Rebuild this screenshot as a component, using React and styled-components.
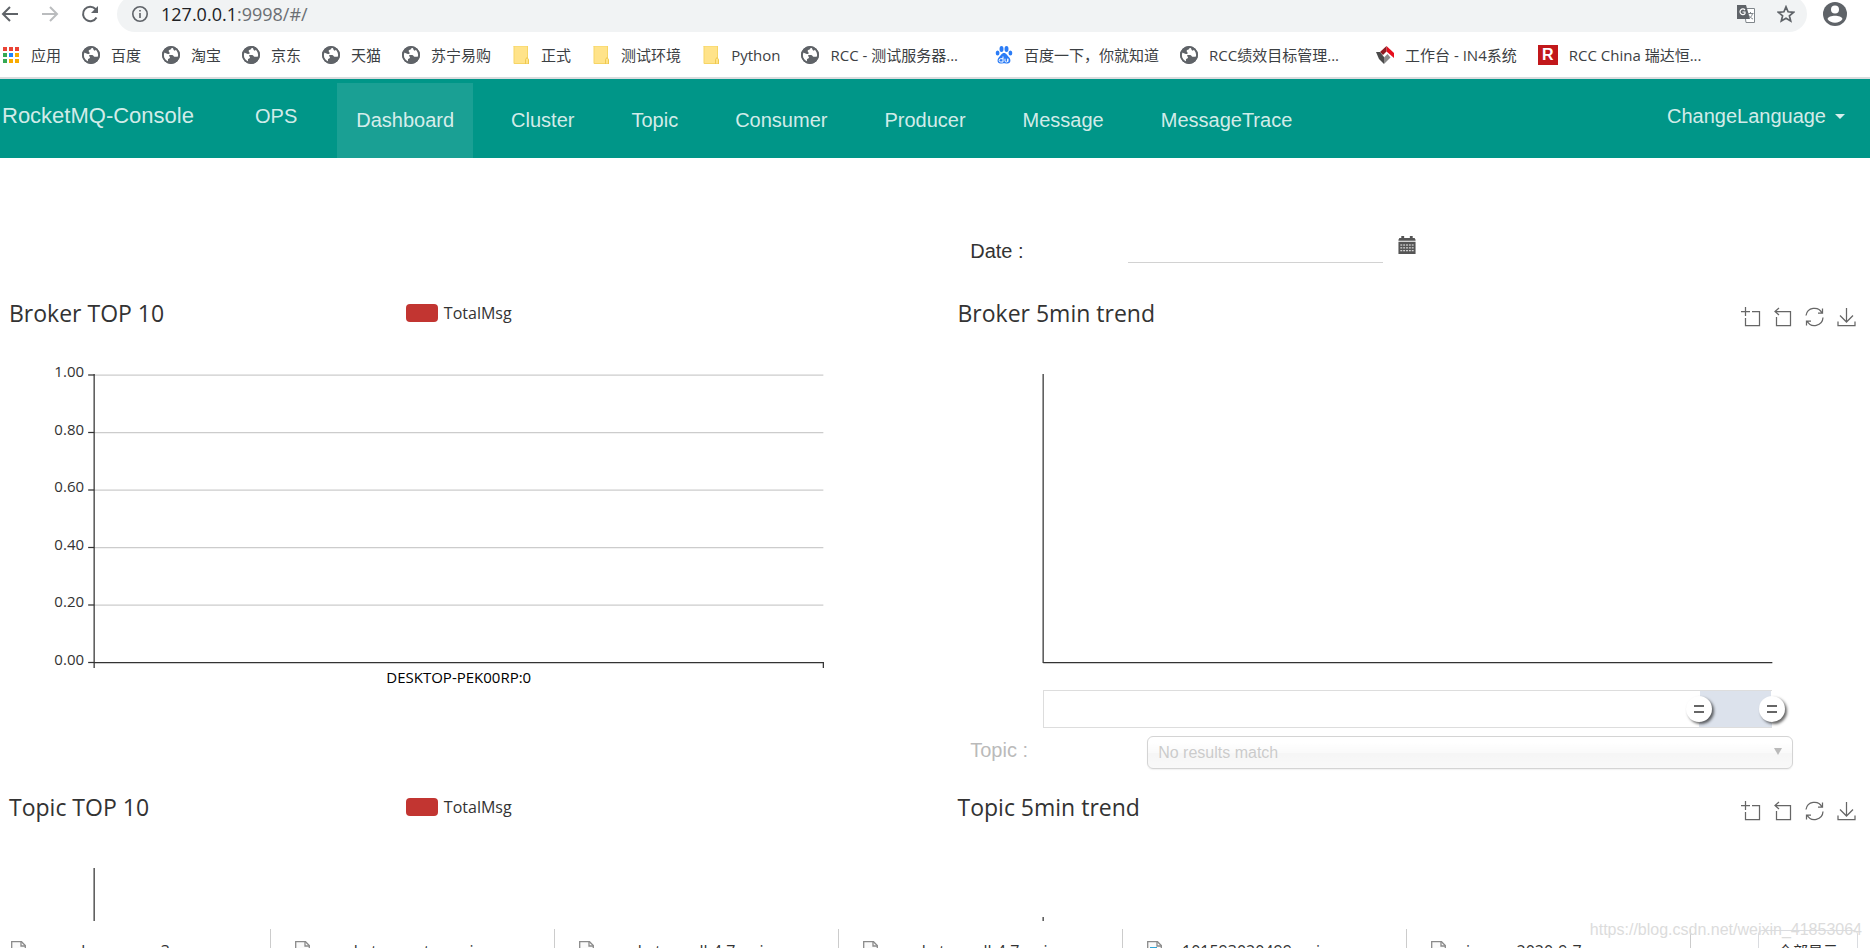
import { useState } from "react";
import styled, { createGlobalStyle } from "styled-components";

const GlobalStyle = createGlobalStyle`
  body {
    margin: 0;
    background: #fff;
    font-family: "Liberation Sans", Arial, sans-serif;
  }

  *, *::before, *::after {
    box-sizing: border-box;
  }
`;

const bookmarks = [
  { title: "应用", icon: "apps" },
  { title: "百度", icon: "globe" },
  { title: "淘宝", icon: "globe" },
  { title: "京东", icon: "globe" },
  { title: "天猫", icon: "globe" },
  { title: "苏宁易购", icon: "globe" },
  { title: "正式", icon: "folder" },
  { title: "测试环境", icon: "folder" },
  { title: "Python", icon: "folder" },
  { title: "RCC - 测试服务器...", icon: "globe", wide: true },
  { title: "百度一下，你就知道", icon: "baidu" },
  { title: "RCC绩效目标管理...", icon: "globe", wide: true },
  { title: "工作台 - IN4系统", icon: "in4" },
  { title: "RCC China 瑞达恒...", icon: "rcc" },
];

const navItems = [
  "Dashboard",
  "Cluster",
  "Topic",
  "Consumer",
  "Producer",
  "Message",
  "MessageTrace",
];

const downloads = [
  { name: "apache-maven-3….exe" },
  { name: "rocketmq-exter….zip" },
  { name: "rocketmq-all-4.7….zip" },
  { name: "rocketmq-all-4.7….zip" },
  { name: "101593020499….zip", image: true },
  { name: "image-2020-9-7….png" },
];

const BookmarkIcon = ({ type }) => {
  switch (type) {
    case "apps":
      return (
        <svg width="18" height="18" viewBox="0 0 18 18">
          {["#ea4335", "#ea4335", "#ea4335", "#34a853", "#1a84ff", "#f9ab00", "#34a853", "#f9ab00", "#f9ab00"].map(
            (fill, i) => (
              <rect key={i} x={(i % 3) * 6 + 1} y={Math.floor(i / 3) * 6 + 1} width="4" height="4" fill={fill} />
            )
          )}
        </svg>
      );
    case "folder":
      return (
        <svg width="18" height="18" viewBox="0 0 18 18">
          <path d="M2 0h13v12l2 2v4H2z" fill="#ffe38a" />
          <path d="M1.500 0h14v12M2 0v17.500h12.500" fill="none" stroke="#f6d565" />
          <path d="M13.500 18v-4.500l1.500-2 1.500 2V18z" fill="#ffe38a" stroke="#efc94f" />
        </svg>
      );
    case "baidu":
      return (
        <svg width="18" height="18" viewBox="0 0 18 18" fill="#2b7cf6">
          <ellipse cx="6.500" cy="3" rx="2" ry="2.900" />
          <ellipse cx="11.500" cy="3" rx="2" ry="2.900" />
          <ellipse cx="2.600" cy="7" rx="1.900" ry="2.600" />
          <ellipse cx="15.400" cy="7" rx="1.900" ry="2.600" />
          <path d="M9 7c2.500 0 3.200 2.600 5 4.200 2 1.800 2.200 6.300-1.500 6.300-1.300 0-2-.3-3.500-.3s-2.200.3-3.500.3c-3.700 0-3.500-4.500-1.500-6.300C5.800 9.600 6.500 7 9 7z" />
          <path d="M8 10.500V16H5.800a1.600 1.600 0 0 1 0-3.300H8M10 12.700V15c0 1.400 2.800 1.400 2.800 0v-2.300V16" fill="none" stroke="#fff" />
        </svg>
      );
    case "in4":
      return (
        <svg width="18" height="18" viewBox="0 0 18 18">
          <path d="M10.500 0L18 7v5l-7.500-6.500z" fill="#e60f1e" />
          <path d="M10.500 0v5.500L7 9 4 6z" fill="#8e1c22" />
          <path d="M0 6h4l4 5v7l-5-5z" fill="#4a4a4a" />
          <path d="M8 11.500l3.500-3.500 3 3.500L8 18z" fill="#8a8a8a" />
        </svg>
      );
    case "rcc":
      return <RccBadge>R</RccBadge>;
    default:
      return (
        <svg width="18" height="18" viewBox="0 0 18 18">
          <circle cx="9" cy="9" r="9" fill="#5f6368" />
          <path d="M10.500 1.800c-1.500.2-1 1.200-1.900 1.700-1 .6-2 .4-2 1.500s1 .9 1.100 2c.1.900-.9 1-1.900.9L2 6.600C.8 9.600 2 14 5.900 15.900c.5-1.400-.4-2 .3-2.900.6-.8 1.700-.5 1.800-1.600.1-.9-1.200-1-.9-1.900.3-.8 1.800-.4 2.900-.4 1.500 0 1.400 1.300 2.300 1.600.9.300 2.600-.1 4-.2.700-3.300-.8-5.700-2.300-6.900-.4.800-1 1.300-1.800 1-.9-.4-.5-1.800-1.700-2.800z" fill="#fff" />
          <circle cx="9" cy="9" r="8.100" fill="none" stroke="#5f6368" strokeWidth="1.800" />
        </svg>
      );
  }
};

const toolPaths = [
  { title: "Zoom", d: "M4.500 0v9M0 4.500h9M11 4.500h7.500v14H4.500V11" },
  { title: "Zoom Reset", d: "M6 1L2 4.500 6 8M2 4.500h15.500v14H3.500V10" },
  { title: "Refresh", d: "M1 8.500A8.500 8.500 0 0 1 17 6M17.500 1.500V6H13M18 10.500A8.500 8.500 0 0 1 2 14M1.500 18.500V14H6" },
  { title: "Save", d: "M9.500 1v14M3 8.500L9.500 15 16 8.500M1 14.500v4h17v-4" },
];

const Toolbox = () => (
  <Tools>
    {toolPaths.map((tool) => (
      <IconButton key={tool.title} title={tool.title}>
        <svg width="20" height="20" viewBox="0 0 20 20" fill="none" stroke="#666" strokeWidth="1.250">
          <path d={tool.d} />
        </svg>
      </IconButton>
    ))}
  </Tools>
);

const ChartHeader = ({ title, legend, tools }) => (
  <Header>
    <ChartTitle>{title}</ChartTitle>
    {legend ? (
      <Legend>
        <Swatch />
        {legend}
      </Legend>
    ) : (
      <span />
    )}
    {tools && <Toolbox />}
  </Header>
);

const BarPlot = () => (
  <Plot>
    {[0, 1, 2, 3, 4].map((i) => (
      <line key={i} x1="10%" x2="90%" y1={i * 57.5 + 25} y2={i * 57.5 + 25} stroke="#ccc" strokeWidth="1.250" />
    ))}
    {["1.00", "0.80", "0.60", "0.40", "0.20", "0.00"].map((label, i) => (
      <g key={label}>
        <AxisLabel x="9%" dx="-1" y={i * 57.5 + 27} textAnchor="end">
          {label}
        </AxisLabel>
        <svg x="10%" y={i * 57.5 + 25} overflow="visible">
          <line x1="-6" x2="0" stroke="#333" strokeWidth="1.250" />
        </svg>
      </g>
    ))}
    <line x1="10%" x2="10%" y1="24" y2="318" stroke="#333" strokeWidth="1.250" />
    <line x1="90%" x2="90%" y1="312" y2="318" stroke="#333" strokeWidth="1.250" />
    <line x1="10%" x2="90%" y1="312.500" y2="312.500" stroke="#333" strokeWidth="1.250" />
    <AxisLabel x="50%" y="333" textAnchor="middle" $dark>
      DESKTOP-PEK00RP:0
    </AxisLabel>
  </Plot>
);

const TrendPlot = () => (
  <Plot>
    <line x1="10%" x2="10%" y1="24" y2="313" stroke="#333" strokeWidth="1.250" />
    <line x1="10%" x2="90%" y1="312.500" y2="312.500" stroke="#333" strokeWidth="1.250" />
  </Plot>
);

const DataZoom = () => {
  const [start, setStart] = useState(90);
  const [end, setEnd] = useState(100);

  return (
    <ZoomTrack>
      <ZoomFill style={{ marginLeft: `${start}%`, width: `${end - start}%` }} />
      <ZoomRange
        type="range"
        aria-label="Zoom start"
        value={start}
        onChange={(e) => setStart(Math.min(Number(e.target.value), end))}
      />
      <ZoomRange
        type="range"
        aria-label="Zoom end"
        value={end}
        onChange={(e) => setEnd(Math.max(Number(e.target.value), start))}
      />
    </ZoomTrack>
  );
};

const App = () => {
  return (
    <Window>
      <GlobalStyle />
      <AddressBar>
        <IconButton title="Back">
          <svg width="18" height="18" viewBox="0 0 18 18" fill="none" stroke="#5f6368" strokeWidth="2">
            <path d="M17 9H2M9 2L2 9l7 7" />
          </svg>
        </IconButton>
        <IconButton title="Forward">
          <svg width="18" height="18" viewBox="0 0 18 18" fill="none" stroke="#babcbe" strokeWidth="2">
            <path d="M1 9h15M9 2l7 7-7 7" />
          </svg>
        </IconButton>
        <IconButton title="Reload">
          <svg width="18" height="18" viewBox="0 0 18 18" fill="none" stroke="#5f6368" strokeWidth="2">
            <path d="M15.500 12.500A7.200 7.200 0 1 1 14.500 4L16 6" />
            <path d="M17 1v7h-7z" fill="#5f6368" stroke="none" />
          </svg>
        </IconButton>
        <Omnibox>
          <svg width="16" height="16" viewBox="0 0 16 16" fill="none" stroke="#5f6368" strokeWidth="1.600">
            <circle cx="8" cy="8" r="7.200" />
            <path d="M8 7v5M8 4v1.600" />
          </svg>
          <Url>
            127.0.0.1<UrlPath>:9998/#/</UrlPath>
          </Url>
          <IconButton title="Translate">
            <svg width="18" height="18" viewBox="0 0 18 18">
              <path d="M7 3.500h10.500v14H9z" fill="#fff" stroke="#80868b" />
              <path d="M0 0h9l4 14H0z" fill="#5f6368" />
              <path d="M8 5A2.800 2.800 0 1 0 8 8.500V7H5.500" fill="none" stroke="#fff" strokeWidth="1.200" />
              <path d="M10.500 8.500h6M13.500 7v1.500M15.500 8.500c-.5 2.500-2 4-3.500 5M12 10.500c1 1.500 2.500 3 4 3.500" fill="none" stroke="#80868b" />
            </svg>
          </IconButton>
          <IconButton title="Bookmark">
            <svg width="18" height="18" viewBox="0 0 18 18" fill="none" stroke="#5f6368" strokeWidth="1.700">
              <path d="M9 1.800l2.100 5 5.400.5-4.100 3.500 1.300 5.300L9 13.300l-4.700 2.800 1.300-5.300L1.500 7.300l5.400-.5z" />
            </svg>
          </IconButton>
        </Omnibox>
        <IconButton title="Profile">
          <svg width="24" height="24" viewBox="0 0 24 24">
            <circle cx="12" cy="12" r="12" fill="#5f6368" />
            <circle cx="12" cy="7.500" r="4" fill="#fff" />
            <path d="M4.500 17c1.200-4.400 13.800-4.400 15 0-3.200 5-11.800 5-15 0z" fill="#fff" />
          </svg>
        </IconButton>
      </AddressBar>

      <BookmarkBar>
        {bookmarks.map((bookmark) => (
          <Bookmark key={bookmark.title} href="#" $wide={bookmark.wide}>
            <BookmarkIcon type={bookmark.icon} />
            {bookmark.title}
          </Bookmark>
        ))}
      </BookmarkBar>

      <Nav>
        <Brand href="#">RocketMQ-Console</Brand>
        <OpsLink href="#">OPS</OpsLink>
        <NavList>
          {navItems.map((item) => (
            <NavLink key={item} href="#" $active={item === "Dashboard"}>
              {item}
            </NavLink>
          ))}
        </NavList>
        <LanguageButton>
          ChangeLanguage
          <Caret />
        </LanguageButton>
      </Nav>

      <Content>
        <DateRow>
          <Label htmlFor="date">Date :</Label>
          <DateInput id="date" type="text" />
          <IconButton title="Pick a date">
            <svg width="18" height="19" viewBox="0 0 18 20">
              <path d="M1 2h2V0h3v2h6V0h3v2h2l1 2v1H0V4zM0 6h18v13H0z" fill="#555" />
              <path d="M2 9.500h14M2 12.500h14M2 15.500h14" stroke="#fff" strokeDasharray="2 1" />
            </svg>
          </IconButton>
        </DateRow>

        <Charts>
          <Chart>
            <ChartHeader title="Broker TOP 10" legend="TotalMsg" />
            <BarPlot />
          </Chart>
          <Chart>
            <ChartHeader title="Broker 5min trend" tools />
            <TrendPlot />
            <DataZoom />
          </Chart>
        </Charts>

        <TopicRow>
          <Label htmlFor="topic">Topic :</Label>
          <SelectWrap>
            <TopicSelect id="topic">
              <option>No results match</option>
            </TopicSelect>
            <SelectArrow />
          </SelectWrap>
        </TopicRow>

        <Charts>
          <Chart>
            <ChartHeader title="Topic TOP 10" legend="TotalMsg" />
            <Plot>
              <line x1="10%" x2="10%" y1="24" y2="313" stroke="#333" strokeWidth="1.250" />
            </Plot>
          </Chart>
          <Chart>
            <ChartHeader title="Topic 5min trend" tools />
            <Plot>
              <line x1="10%" x2="10%" y1="73" y2="313" stroke="#333" strokeWidth="1.250" />
            </Plot>
          </Chart>
        </Charts>
      </Content>

      <Shelf>
        {downloads.map((file, index) => (
          <Download key={index}>
            <svg width="15" height="18" viewBox="0 0 15 18">
              <path d="M.7.7h9.800l3.800 3.800v12.800H.7z" fill="#fafafa" stroke="#8a8a8a" strokeWidth="1.300" />
              <path d="M10 .7v4.300h4.300" fill="none" stroke="#8a8a8a" strokeWidth="1.300" />
              {file.image && <path d="M3 6h7v8H3z" fill="#2fa5d8" />}
            </svg>
            {file.name}
          </Download>
        ))}
        <ShowAll>全部显示</ShowAll>
      </Shelf>
      <Watermark>https://blog.csdn.net/weixin_41853064</Watermark>
    </Window>
  );
};

export default App;

const uiFont = `"Open Sans", "Noto Sans CJK SC", sans-serif`;

const Window = styled.div`
  height: 100vh;
  display: flex;
  flex-direction: column;
  overflow: hidden;
`;

const AddressBar = styled.div`
  flex-shrink: 0;
  height: 32px;
  display: flex;
  align-items: center;
  gap: 22px;
  padding: 0 23px 4px 1px;
`;

const IconButton = styled.button`
  display: flex;
  flex-shrink: 0;
  padding: 0;
  border: none;
  background: none;
`;

const Omnibox = styled.div`
  flex: 1;
  height: 36px;
  display: flex;
  align-items: center;
  gap: 22px;
  padding: 0 12px 0 15px;
  margin: 0 -6px 0 -4px;
  border-radius: 18px;
  background: #f1f3f4;
`;

const Url = styled.span`
  flex: 1;
  margin-left: -9px;
  font-family: ${uiFont};
  font-size: 18px;
  line-height: 24px;
  color: #202124;
`;

const UrlPath = styled.span`
  color: #6b6f73;
`;

const BookmarkBar = styled.nav`
  flex-shrink: 0;
  height: 47px;
  display: flex;
  align-items: center;
  gap: 21px;
  padding: 0 2px;
  border-bottom: solid 2px #dadcde;
`;

const Bookmark = styled.a`
  display: flex;
  align-items: center;
  gap: 11px;
  margin-right: ${(props) => (props.$wide ? "16px" : "0")};
  font-family: ${uiFont};
  font-size: 15px;
  line-height: 20px;
  white-space: nowrap;
  color: #3c4043;
  text-decoration: none;
`;

const RccBadge = styled.span`
  width: 20px;
  height: 20px;
  background: #c2181b;
  color: #fff;
  font-family: "Liberation Sans", Arial, sans-serif;
  font-size: 16px;
  font-weight: bold;
  text-align: center;
`;

const Nav = styled.nav`
  flex-shrink: 0;
  height: 79px;
  display: flex;
  align-items: flex-start;
  background: #009688;
`;

const Brand = styled.a`
  width: 236px;
  padding: 24px 0 0 2px;
  font-size: 22px;
  line-height: 26px;
  color: rgba(255, 255, 255, 0.84);
  text-decoration: none;
`;

const OpsLink = styled(Brand)`
  width: auto;
  padding: 24px 19px 0;
  font-size: 20px;
`;

const NavList = styled.div`
  flex: 1;
  align-self: stretch;
  display: flex;
  gap: 19px;
  padding-top: 4px;
  margin-left: 21px;
`;

const NavLink = styled.a`
  padding: 24px 19px;
  font-size: 20px;
  line-height: 26px;
  color: rgba(255, 255, 255, 0.84);
  background: ${(props) => (props.$active ? "rgba(255, 255, 255, 0.1)" : "none")};
  text-decoration: none;
`;

const LanguageButton = styled.button`
  display: flex;
  align-items: center;
  gap: 9px;
  padding: 24px 25px 0 0;
  border: none;
  background: none;
  font-family: inherit;
  font-size: 20px;
  line-height: 26px;
  color: rgba(255, 255, 255, 0.84);
`;

const Caret = styled.span`
  border: solid 5px transparent;
  border-top-color: currentColor;
  border-bottom: none;
`;

const Content = styled.main`
  flex: 1;
  min-height: 0;
  overflow: hidden;
  padding: 78px 7px 0 3px;
`;

const DateRow = styled.div`
  display: flex;
  align-items: flex-start;
  margin: 0 0 11px 52%;
`;

const Label = styled.label`
  width: 158px;
  padding-top: 2px;
  font-size: 20px;
  line-height: 26px;
  color: #333;
`;

const DateInput = styled.input`
  width: 255px;
  height: 27px;
  margin-right: 15px;
  padding: 0;
  border: none;
  border-bottom: solid 1px #d2d2d2;
  background: none;
  font-size: 18px;
`;

const Charts = styled.section`
  display: grid;
  grid-template-columns: 1fr 1fr;
  column-gap: 37px;
`;

const Chart = styled.div`
  padding-top: 22px;
`;

const Header = styled.header`
  height: 53px;
  display: grid;
  grid-template-columns: 1fr auto 1fr;
  align-items: start;
  padding: 0 6px;
`;

const ChartTitle = styled.h2`
  margin: 0;
  font-family: ${uiFont};
  font-size: 23px;
  font-weight: normal;
  line-height: 32px;
  color: #333;
`;

const Legend = styled.span`
  display: flex;
  align-items: center;
  gap: 6px;
  font-family: ${uiFont};
  font-size: 16px;
  line-height: 32px;
  color: #333;
`;

const Swatch = styled.span`
  width: 32px;
  height: 18px;
  border-radius: 4px;
  background: #c23531;
`;

const Tools = styled.div`
  display: flex;
  justify-content: flex-end;
  gap: 12px;
  padding-top: 10px;
`;

const Plot = styled.svg`
  display: block;
  width: 100%;
  height: 340px;
`;

const AxisLabel = styled.text`
  font-family: ${uiFont};
  font-size: 15px;
  fill: ${(props) => (props.$dark ? "#000" : "#333")};
`;

const ZoomTrack = styled.div`
  height: 38px;
  display: grid;
  grid-template-columns: 1fr;
  margin: 0 10%;
  border: solid 1px #ddd;
  border-right: none;

  > * {
    grid-area: 1 / 1;
  }
`;

const ZoomFill = styled.div`
  background: linear-gradient(#fff, #fff) left top / 1px 32px no-repeat,
    linear-gradient(#fff, #fff) right top / 1px 32px no-repeat, #dce2ec;
`;

const ZoomRange = styled.input`
  appearance: none;
  z-index: 1;
  margin: 0 -13px;
  background: none;
  pointer-events: none;

  &::-webkit-slider-thumb {
    appearance: none;
    width: 26px;
    height: 26px;
    border-radius: 50%;
    background: linear-gradient(#666, #666) center 9px / 10px 2px no-repeat,
      linear-gradient(#666, #666) center 15px / 10px 2px no-repeat, #fff;
    box-shadow: 2px 2px 3px rgba(0, 0, 0, 0.6);
    pointer-events: auto;
  }
`;

const TopicRow = styled.div`
  display: flex;
  align-items: center;
  margin: 8px 70px 0 52%;
  opacity: 0.5;

  ${Label} {
    width: 177px;
    padding: 0 0 5px;
    color: #777;
  }
`;

const SelectWrap = styled.div`
  flex: 1;
  display: grid;
  align-items: center;

  > * {
    grid-area: 1 / 1;
  }
`;

const TopicSelect = styled.select`
  appearance: none;
  width: 100%;
  height: 33px;
  padding: 0 10px;
  border: solid 1px #aaa;
  border-radius: 6px;
  background: linear-gradient(#fff 20%, #f6f6f6 50%, #eee 52%, #f4f4f4 100%);
  box-shadow: 0 1px 1px rgba(0, 0, 0, 0.1);
  font-family: inherit;
  font-size: 16px;
  color: #999;
`;

const SelectArrow = styled.span`
  justify-self: end;
  margin: 0 11px 2px 0;
  border: solid 4px transparent;
  border-top: solid 7px #777;
  border-bottom: none;
  pointer-events: none;
`;

const Shelf = styled.footer`
  flex-shrink: 0;
  height: 27px;
  display: flex;
  padding-top: 8px;
  overflow: hidden;
`;

const Download = styled.div`
  flex: 0 1 284px;
  height: 50px;
  display: flex;
  align-items: flex-start;
  gap: 20px;
  padding: 12px 0 0 24px;
  border-right: solid 1px #ccc;
  font-family: ${uiFont};
  font-size: 16px;
  line-height: 20px;
  white-space: nowrap;
  color: #333;

  &:first-child {
    flex-basis: 271px;
    padding-left: 11px;
  }
`;

const ShowAll = styled.button`
  width: 100px;
  height: 40px;
  margin: 1px 12px 0 auto;
  padding: 0;
  border: solid 1px #dadce0;
  border-radius: 4px;
  background: #fff;
  font-family: ${uiFont};
  font-size: 15px;
  color: #333;
`;

/* sits on top of the download shelf */
const Watermark = styled.span`
  position: absolute;
  right: 8px;
  bottom: 8px;
  font-size: 16px;
  line-height: 20px;
  color: #dcdcdc;
`;
